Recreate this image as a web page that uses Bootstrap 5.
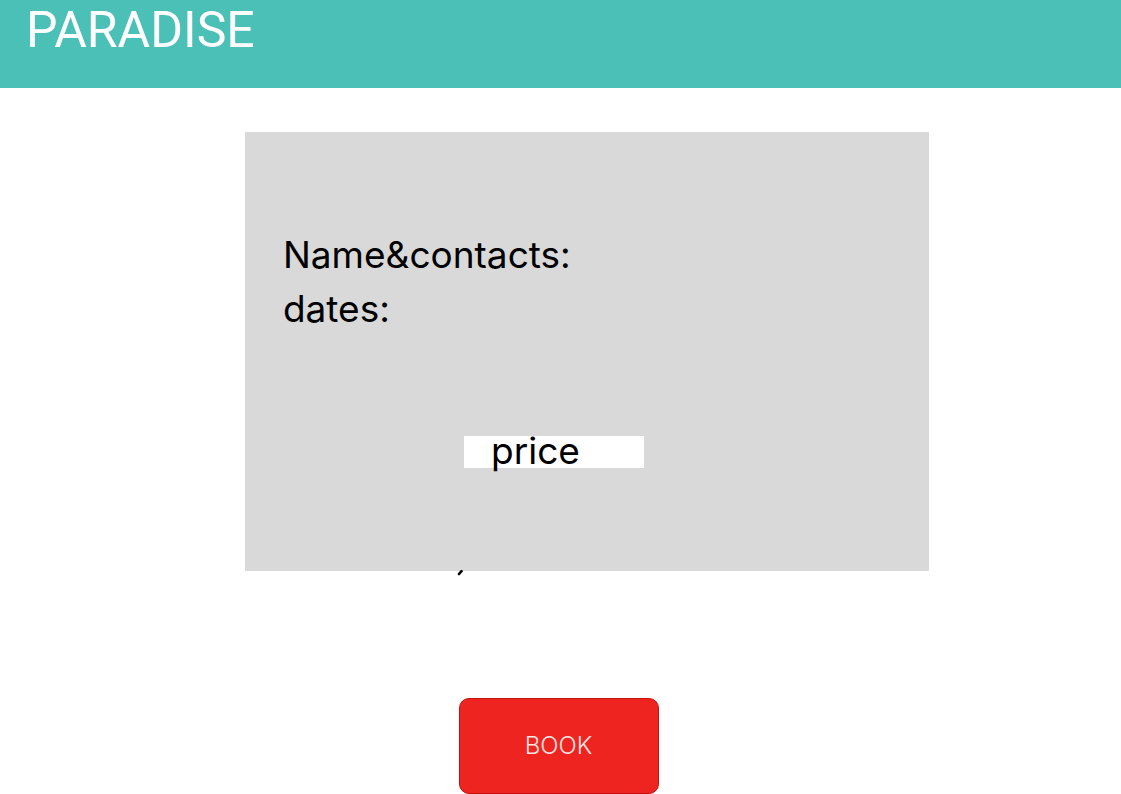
<!DOCTYPE html>
<html lang="en">
<head>
<meta charset="utf-8">
<meta name="viewport" content="width=device-width, initial-scale=1">
<title>Paradise</title>
<link href="https://cdn.jsdelivr.net/npm/bootstrap@5.3.0/dist/css/bootstrap.min.css" rel="stylesheet">
<style>
body { font-family: Inter, sans-serif; color: #000; background: #fff; }
.site-header { background: #4ac0b7; height: 88px; padding: 0 26px; }
.brand { font: 400 50px/60px Roboto, sans-serif; color: #fff; }
.booking { width: 61%; min-width: 330px; margin: 44px auto 0 21.85%; padding: 96px 38px 103px; background: #d9d9d9; font-size: 37px; line-height: 54px; }
.price-box { display: block; width: 180px; height: 32px; line-height: 30px; margin: 100px auto 0 29.8%; padding-left: 27px; background: #fff; }
.tick { top: 100%; left: 31%; margin-top: -1px; }
.btn-book { width: 200px; height: 96px; border-radius: 10px; font-size: 24px; font-weight: 300;
  --bs-btn-color: #fde4e3; --bs-btn-bg: #ed241f; --bs-btn-border-color: #c41210;
  --bs-btn-hover-color: #fff; --bs-btn-hover-bg: #d51c18; --bs-btn-active-color: #fff; --bs-btn-active-bg: #c41210; }
.actions { padding: 127px 4px 0 0; }
</style>
</head>
<body>
<header class="site-header"><a class="brand d-inline-block text-decoration-none" href="#">PARADISE</a></header>
<main>
  <section class="booking position-relative">
    <div>Name&amp;contacts:</div>
    <div>dates:</div>
    <div class="price-box">price</div>
    <svg class="tick position-absolute" width="6" height="6" viewBox="0 0 6 6" aria-hidden="true"><path d="M2 4 4.5 1.2" stroke="#000" stroke-width="2.6" stroke-linecap="round"/></svg>
  </section>
  <div class="actions d-flex justify-content-center"><button type="button" class="btn btn-book">BOOK</button></div>
</main>
<script src="https://cdn.jsdelivr.net/npm/bootstrap@5.3.0/dist/js/bootstrap.bundle.min.js"></script>
</body>
</html>
